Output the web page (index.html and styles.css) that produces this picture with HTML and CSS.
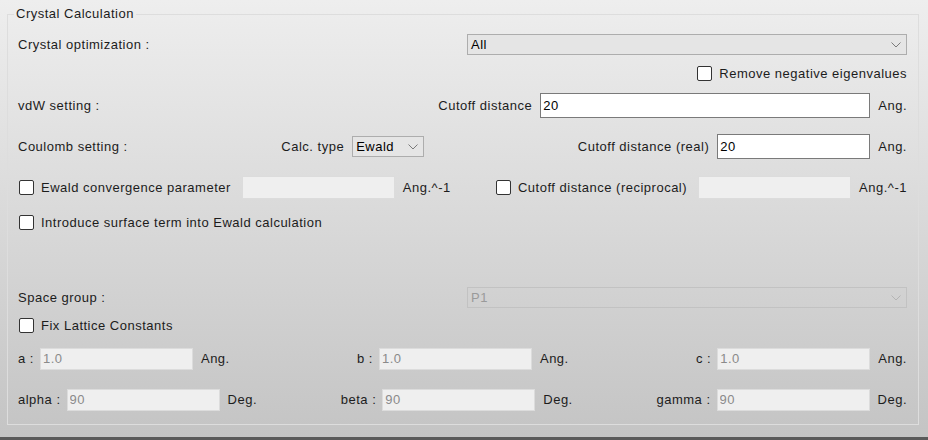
FILE: index.html
```html
<!DOCTYPE html>
<html>
<head>
<meta charset="utf-8">
<link rel="stylesheet" href="styles.css">
</head>
<body>
<div class="panel">
  <fieldset class="group">
    <legend>Crystal Calculation</legend>

    <div class="row r1">
      <span class="grow">Crystal optimization :</span>
      <div class="select wide"><span>All</span><svg class="chev" width="10" height="6" viewBox="0 0 10 6"><polyline points="0.5,0.5 5,5 9.5,0.5" /></svg></div>
    </div>

    <div class="row r2 end">
      <span class="box"></span><span class="cklbl">Remove negative eigenvalues</span>
    </div>

    <div class="row r3 between">
      <span>vdW setting :</span>
      <div class="grp"><span>Cutoff distance</span><input class="field w330" type="text" value="20"><span class="unit">Ang.</span></div>
    </div>

    <div class="row r4 between">
      <span>Coulomb setting :</span>
      <div class="grp"><span>Calc. type</span><div class="select small"><span>Ewald</span><svg class="chev" width="10" height="6" viewBox="0 0 10 6"><polyline points="0.5,0.5 5,5 9.5,0.5" /></svg></div></div>
      <div class="grp"><span>Cutoff distance (real)</span><input class="field" type="text" value="20"><span class="unit">Ang.</span></div>
    </div>

    <div class="row r5 between">
      <div class="grp"><span class="box first"></span><span class="cklbl">Ewald convergence parameter</span><input class="field dis wide2" type="text" value="" disabled><span class="unit">Ang.^-1</span></div>
      <div class="grp"><span class="box"></span><span class="cklbl">Cutoff distance (reciprocal)</span><input class="field dis wide2" type="text" value="" disabled><span class="unit">Ang.^-1</span></div>
    </div>

    <div class="row r6">
      <span class="box first"></span><span class="cklbl">Introduce surface term into Ewald calculation</span>
    </div>

    <div class="row r7">
      <span class="grow">Space group :</span>
      <div class="select wide dis"><span>P1</span><svg class="chev" width="10" height="6" viewBox="0 0 10 6"><polyline points="0.5,0.5 5,5 9.5,0.5" /></svg></div>
    </div>

    <div class="row r8">
      <span class="box first"></span><span class="cklbl">Fix Lattice Constants</span>
    </div>

    <div class="row r9 between">
      <div class="grp"><span>a :</span><input class="field dis lat" type="text" value="1.0" disabled><span class="unit">Ang.</span></div>
      <div class="grp"><span>b :</span><input class="field dis lat" type="text" value="1.0" disabled><span class="unit">Ang.</span></div>
      <div class="grp"><span>c :</span><input class="field dis lat" type="text" value="1.0" disabled><span class="unit">Ang.</span></div>
    </div>

    <div class="row r10 between">
      <div class="grp"><span>alpha :</span><input class="field dis lat" type="text" value="90" disabled><span class="unit">Deg.</span></div>
      <div class="grp"><span>beta :</span><input class="field dis lat" type="text" value="90" disabled><span class="unit">Deg.</span></div>
      <div class="grp"><span>gamma :</span><input class="field dis lat" type="text" value="90" disabled><span class="unit">Deg.</span></div>
    </div>
  </fieldset>
</div>
</body>
</html>
```

FILE: styles.css
```css
html, body {
  margin: 0;
  padding: 0;
}

body {
  font-family: "Liberation Sans", Arial, sans-serif;
  font-size: 13px;
  letter-spacing: 0.5px;
  color: #1c1c1c;
  width: 928px;
  height: 440px;
  overflow: hidden;
}

.panel {
  box-sizing: border-box;
  height: 440px;
  padding-top: 7px;
  background: linear-gradient(#eeeeee, #c4c4c4);
  border-bottom: 3px solid #5a5a5a;
}

.group {
  margin: 0 9px 0 7px;
  padding: 0 11px 13px 10px;
  border: 1px solid #dddddd;
  min-width: 0;
}

.group legend {
  padding: 0 2px;
  margin-left: -4px;
  line-height: 14px;
}

.row {
  display: flex;
  align-items: center;
}

.between { justify-content: space-between; }
.end { justify-content: flex-end; }
.grow { flex: 1; }

.r1 { height: 21px; margin-top: 13px; }
.r2 { height: 16px; margin-top: 10px; }
.r3 { height: 25px; margin-top: 12px; }
.r4 { height: 25px; margin-top: 16px; }
.r5 { height: 24px; margin-top: 16px; }
.r6 { height: 16px; margin-top: 15px; }
.r7 { height: 21px; margin-top: 57px; }
.r8 { height: 16px; margin-top: 9px; }
.r9 { height: 23px; margin-top: 14px; }
.r10 { height: 23px; margin-top: 18px; }

.grp {
  display: flex;
  align-items: center;
}

.field {
  box-sizing: border-box;
  width: 153px;
  height: 25px;
  margin: 0 0 0 8px;
  padding: 0 2px;
  border: 1px solid #7a7a7a;
  border-radius: 0;
  background: #ffffff;
  font: inherit;
  letter-spacing: inherit;
  color: #000;
  outline: none;
}

.field.w330 { width: 330px; }
.field.wide2 { margin-left: 11px; }

.field.dis {
  height: 23px;
  background: #efefef;
  border-color: #dcdcdc;
  color: #8a8a8a;
}

.field.lat { height: 22px; margin-left: 6px; }

.unit { margin-left: 8px; }

.box {
  box-sizing: border-box;
  width: 15px;
  height: 15px;
  border: 1px solid #333333;
  border-radius: 2px;
  background: #ffffff;
  margin-right: 7px;
  flex: none;
}

.box.first { margin-left: 1px; }

.select {
  box-sizing: border-box;
  display: flex;
  align-items: center;
  justify-content: space-between;
  height: 21px;
  padding: 0 5px 0 3px;
  border: 1px solid #adadad;
  background: #e5e5e5;
  color: #000;
}

.select.wide { width: 440px; }
.select.small { width: 72px; margin-left: 8px; }

.select.dis {
  background: transparent;
  border-color: #c2c2c2;
  color: #9a9a9a;
}

.chev {
  fill: none;
  stroke: #7a7a7a;
  stroke-width: 1;
}

.select.dis .chev { stroke: #b4b4b4; }
```
